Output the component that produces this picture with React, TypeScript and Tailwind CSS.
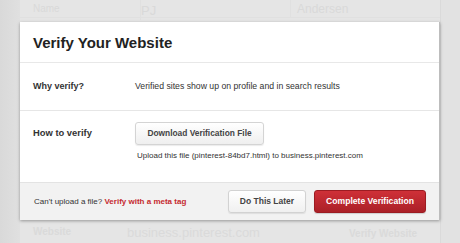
import React from 'react';

const font = { fontFamily: '"Liberation Sans", Arial, Helvetica, sans-serif' };

function BackgroundTable() {
  return (
    <div className="flex h-full w-full bg-[#dddddd]">
      <div className="w-[20px] h-full bg-gradient-to-r from-[#d9d9d9] to-[#e0e0e0]" />
      <div className="w-[421px] h-full bg-[#e5e5e5] border-r border-[#dadada] flex flex-col">
        <div className="h-[18px] flex items-center border-b border-[#e0e0e0] text-[#d9d9d9]">
          <span className="w-[120px] pl-[13px] text-[10px]">Name</span>
          <span className="w-[150px] text-[13px] pt-[4px] border-l border-[#e0e0e0]">PJ</span>
          <span className="pl-[6px] text-[12px] border-l border-[#e0e0e0]">Andersen</span>
        </div>
        <div className="flex-1" />
        <div className="h-[23px] flex items-center text-[#dadada]">
          <span className="w-[107px] pl-[13px] text-[10px] font-bold">Website</span>
          <span className="w-[210px] text-[13px] pt-[2px]">business.pinterest.com</span>
          <span className="pl-[12px] text-[10px] font-bold pt-[4px]">Verify Website</span>
        </div>
      </div>
      <div className="flex-1 h-full bg-[#e2e2e2]" />
    </div>
  );
}

function VerifyModal() {
  return (
    <div className="absolute left-[20px] top-[22px] w-[420px] bg-white shadow-[0_1px_3px_rgba(0,0,0,0.35)] border-r border-[#bdbdbd] text-[#333]">
      <div className="h-[41px] flex items-center pl-[13px] border-b border-[#e8e8e8]">
        <h1 className="text-[15px] font-bold text-[#222] pt-[2px]">Verify Your Website</h1>
      </div>

      <div className="h-[48px] flex items-center border-b border-[#e6e6e6]">
        <div className="w-[115px] pl-[13px] text-[9px] font-bold text-[#333]">Why verify?</div>
        <div className="text-[8.7px] text-[#333]">Verified sites show up on profile and in search results</div>
      </div>

      <div className="h-[71px] flex pt-[11px]">
        <div className="w-[115px] pl-[13px] pt-[4px] text-[9.4px] font-bold text-[#333]">How to verify</div>
        <div className="flex flex-col">
          <button className="w-[129px] h-[23px] rounded-[3px] border border-[#d4d4d4] bg-gradient-to-b from-white to-[#efefef] text-[8.4px] font-bold text-[#444] shadow-[0_1px_1px_rgba(0,0,0,0.08)]">
            Download Verification File
          </button>
          <div className="mt-[5px] pl-[2px] text-[8px] text-[#333]">
            Upload this file (pinterest-84bd7.html) to business.pinterest.com
          </div>
        </div>
      </div>

      <div className="h-[38px] flex items-center bg-[#f2f2f2] border-t border-[#e3e3e3] pl-[14px] pr-[13px]">
        <div className="flex-1 text-[8px] text-[#333]">
          Can't upload a file? <span className="font-bold text-[#c52a2f]">Verify with a meta tag</span>
        </div>
        <button className="w-[78px] h-[23px] rounded-[3px] border border-[#d2d2d2] bg-gradient-to-b from-white to-[#f0f0f0] text-[8.5px] font-bold text-[#444] shadow-[0_1px_1px_rgba(0,0,0,0.08)]">
          Do This Later
        </button>
        <button className="ml-[8px] w-[112px] h-[23px] rounded-[3px] border border-[#9c1c22] bg-gradient-to-b from-[#cf3038] to-[#ab2027] text-[8.6px] font-bold text-white shadow-[0_1px_1px_rgba(0,0,0,0.15)]">
          Complete Verification
        </button>
      </div>
    </div>
  );
}

export default function App() {
  return (
    <div className="relative w-[460px] h-[243px] overflow-hidden" style={font}>
      <BackgroundTable />
      <VerifyModal />
    </div>
  );
}
